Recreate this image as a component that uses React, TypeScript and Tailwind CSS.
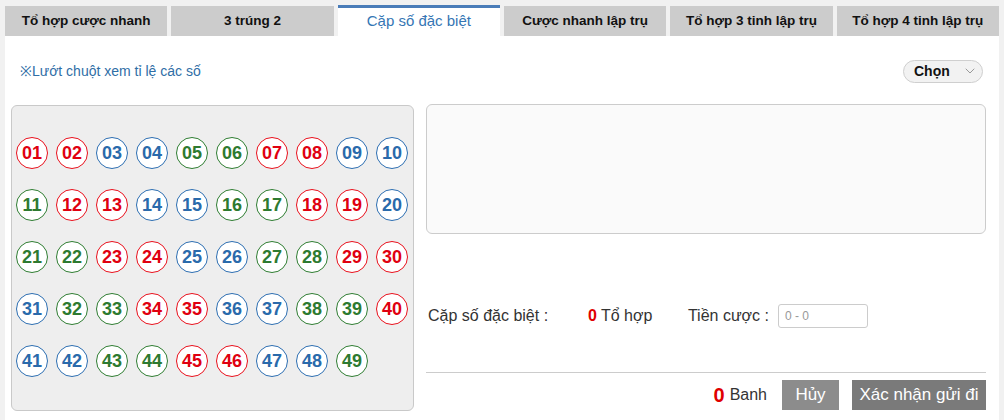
import React from "react";
import { ChevronDown } from "lucide-react";

const tabs = [
  "Tổ hợp cược nhanh",
  "3 trúng 2",
  "Cặp số đặc biệt",
  "Cược nhanh lập trụ",
  "Tổ hợp 3 tinh lập trụ",
  "Tổ hợp 4 tinh lập trụ",
];

const red = [1, 2, 7, 8, 12, 13, 18, 19, 23, 24, 29, 30, 34, 35, 40, 45, 46];
const blue = [3, 4, 9, 10, 14, 15, 20, 25, 26, 31, 36, 37, 41, 42, 47, 48];

function Ball({ n }: { n: number }) {
  const cls = red.includes(n)
    ? "border-[#e8101c] text-[#e00010]"
    : blue.includes(n)
    ? "border-[#2d6eb1] text-[#2a6aab]"
    : "border-[#2f7d32] text-[#2e7a30]";
  return (
    <div
      className={`w-[32px] h-[32px] rounded-full border bg-white flex items-center justify-center text-[18px] font-bold leading-none ${cls}`}
    >
      {String(n).padStart(2, "0")}
    </div>
  );
}

export default function App() {
  const nums = Array.from({ length: 49 }, (_, i) => i + 1);
  return (
    <div className="w-[1004px] h-[420px] bg-[#f1f1f1] pl-[5px] pt-[5px] pr-[5px] font-['Liberation_Sans',Arial,sans-serif] overflow-hidden">
      <div className="w-[994px] h-[415px] flex flex-col">
        {/* Tabs */}
        <div className="flex gap-[4px] h-[31px]">
          {tabs.map((t, i) =>
            i === 2 ? (
              <div
                key={t}
                className="flex-1 bg-white border-t-[3px] border-[#4a7cb8] flex items-center justify-center text-[15px] text-[#3576b4] pb-[1px]"
              >
                {t}
              </div>
            ) : (
              <div
                key={t}
                className="flex-1 bg-[#cccccc] mt-[1px] flex items-center justify-center text-[13.5px] font-bold text-[#111]"
              >
                {t}
              </div>
            )
          )}
        </div>

        {/* Content */}
        <div className="flex-1 bg-white flex flex-col">
          <div className="flex items-center justify-between pl-[15px] pr-[16px] pt-[24px] h-[46px]">
            <span className="text-[14px] text-[#2f6ea6]">※Lướt chuột xem tỉ lệ các số</span>
            <div className="w-[80px] h-[23px] rounded-full border border-[#cfcfcf] bg-[#f2f2f2] flex items-center justify-between pl-[10px] pr-[4px]">
              <span className="text-[14px] font-bold text-[#111]">Chọn</span>
              <ChevronDown className="w-[16px] h-[16px] text-[#999]" strokeWidth={1.5} />
            </div>
          </div>

          <div className="flex mt-[23px] pl-[6px] gap-[12px]">
            {/* Number board */}
            <div className="w-[403px] h-[306px] bg-[#eeeeee] border border-[#c9c9c9] rounded-[6px] pl-[4px] pt-[31px]">
              <div className="grid grid-cols-[repeat(10,32px)] gap-x-[8px] gap-y-[20px]">
                {nums.map((n) => (
                  <Ball key={n} n={n} />
                ))}
              </div>
            </div>

            {/* Right side */}
            <div className="w-[560px] flex flex-col">
              <div className="h-[130px] -mt-[1px] bg-[#fafafa] border border-[#cccccc] rounded-[6px]" />
              <div className="flex items-center h-[24px] mt-[70px] pl-[2px] text-[16px] text-[#333]">
                <span className="w-[160px]">Cặp số đặc biệt :</span>
                <span className="text-[#e00000] font-bold text-[16px] mr-[4px]">0</span>
                <span className="w-[87px]">Tổ hợp</span>
                <span className="mr-[9px]">Tiền cược :</span>
                <div className="w-[90px] h-[24px] border border-[#cccccc] rounded-[3px] flex items-center pl-[6px] text-[12px] text-[#999]">
                  0 - 0
                </div>
              </div>
              <div className="h-px bg-[#cccccc] mt-[44px]" />
              <div className="flex items-center justify-end mt-[7px] h-[30px]">
                <span className="text-[#e00000] font-bold text-[20px] mr-[5px]">0</span>
                <span className="text-[16px] text-[#333] mr-[15px]">Banh</span>
                <div className="w-[57px] h-[30px] bg-[#8c8c8c] text-white text-[17px] flex items-center justify-center mr-[13px]">
                  Hủy
                </div>
                <div className="w-[134px] h-[30px] bg-[#7a7a7a] text-white text-[17px] flex items-center justify-center">
                  Xác nhận gửi đi
                </div>
              </div>
            </div>
          </div>
        </div>
      </div>
    </div>
  );
}
